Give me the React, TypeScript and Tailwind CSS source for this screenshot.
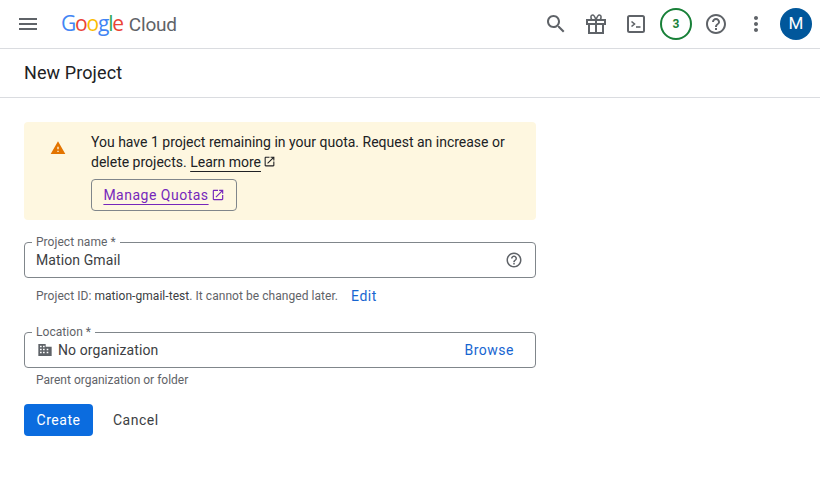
const paths = {
  menu: 'M3 18h18v-2H3v2zm0-5h18v-2H3v2zm0-7v2h18V6H3z',
  search:
    'M15.5 14h-.79l-.28-.27C15.41 12.59 16 11.11 16 9.5 16 5.91 13.09 3 9.5 3S3 5.91 3 9.5 5.91 16 9.5 16c1.61 0 3.09-.59 4.23-1.57l.27.28v.79l5 4.99L20.49 19l-4.99-5zm-6 0C7.01 14 5 11.99 5 9.5S7.01 5 9.5 5 14 7.01 14 9.5 11.99 14 9.5 14z',
  help: 'M11 18h2v-2h-2v2zm1-16C6.48 2 2 6.48 2 12s4.48 10 10 10 10-4.48 10-10S17.52 2 12 2zm0 18c-4.41 0-8-3.59-8-8s3.59-8 8-8 8 3.59 8 8-3.59 8-8 8zm0-14c-2.21 0-4 1.79-4 4h2c0-1.1.9-2 2-2s2 .9 2 2c0 2-3 1.75-3 5h2c0-2.25 3-2.5 3-5 0-2.21-1.79-4-4-4z',
  more: 'M12 8c1.1 0 2-.9 2-2s-.9-2-2-2-2 .9-2 2 .9 2 2 2zm0 2c-1.1 0-2 .9-2 2s.9 2 2 2 2-.9 2-2-.9-2-2-2zm0 6c-1.1 0-2 .9-2 2s.9 2 2 2 2-.9 2-2-.9-2-2-2z',
  warning: 'M1 21h22L12 2 1 21zm12-3h-2v-2h2v2zm0-4h-2v-4h2v4z',
  openNew:
    'M19 19H5V5h7V3H5c-1.11 0-2 .9-2 2v14c0 1.1.89 2 2 2h14c1.1 0 2-.9 2-2v-7h-2v7zM14 3v2h3.59l-9.83 9.83 1.41 1.41L19 6.41V10h2V3h-7z',
  // solid block with window cut-outs, reads heavier than the stock domain glyph at 16px
  domain:
    'M2 3h11v4h9v14H2V3zm2.500 2.500v2.500h2.500V5.500H4.500zm4.500 0v2.500h2.500V5.500H9zm-4.500 4.500v2.500h2.500V10H4.500zm4.500 0v2.500h2.500V10H9zm5.500 0v2.500H17V10h-2.500zM4.500 14.500V17h2.500v-2.500H4.500zm4.500 0V17h2.500v-2.500H9zm5.500 0V17H17v-2.500h-2.500z',
};

function Icon({ d, className }: { d: string; className: string }) {
  return (
    <svg viewBox="0 0 24 24" className={className} fill="currentColor" fillRule="evenodd">
      <path d={d} />
    </svg>
  );
}

function GiftIcon() {
  return (
    <svg viewBox="0 0 24 24" className="w-6 h-6" fill="none" stroke="currentColor" strokeWidth="2">
      <path d="M3 8h18v4H3z" />
      <path d="M5 12v9h14v-9" />
      <path d="M12 8v13" />
      <path d="M12 8S10.500 3 8.500 3C6.500 3 6.500 6 8 8M12 8s1.500-5 3.500-5c2 0 2 3 .5 5" strokeWidth="1.600" />
    </svg>
  );
}

function TerminalIcon() {
  return (
    <svg viewBox="0 0 24 24" className="w-6 h-6" fill="none" stroke="currentColor" strokeWidth="2">
      <rect x="4" y="4" width="16" height="16" rx="1.500" />
      <path d="M7.500 9.500 10.500 12l-3 2.500" strokeWidth="1.600" />
      <path d="M12 15h4.500" strokeWidth="1.600" />
    </svg>
  );
}

function Header() {
  return (
    <header className="h-[49px] flex items-center border-b border-[#dadce0] pl-2 pr-1 shrink-0">
      <button className="w-10 h-10 flex items-center justify-center text-[#5f6368]">
        <Icon d={paths.menu} className="w-6 h-6" />
      </button>
      <div className="ml-[13px] mb-[2px] flex items-baseline leading-none">
        <span className="flex font-['Open_Sans',sans-serif] text-[21px] tracking-[-1.2px]">
          <span className="text-[#4285f4]">G</span>
          <span className="text-[#ea4335]">o</span>
          <span className="text-[#fbbc04]">o</span>
          <span className="text-[#4285f4]">g</span>
          <span className="text-[#34a853]">l</span>
          <span className="text-[#ea4335]">e</span>
        </span>
        <span className="ml-[6px] text-[19px] text-[#5f6368] tracking-[-0.2px]">Cloud</span>
      </div>
      <div className="ml-auto flex items-center text-[#5f6368]">
        <button className="w-10 h-10 flex items-center justify-center">
          <Icon d={paths.search} className="w-6 h-6" />
        </button>
        <button className="w-10 h-10 flex items-center justify-center">
          <GiftIcon />
        </button>
        <button className="w-10 h-10 flex items-center justify-center">
          <TerminalIcon />
        </button>
        <div className="w-10 h-10 flex items-center justify-center">
          <div className="w-8 h-8 rounded-full border-2 border-[#188038] flex items-center justify-center text-[12px] font-bold text-[#188038]">
            3
          </div>
        </div>
        <button className="w-10 h-10 flex items-center justify-center">
          <Icon d={paths.help} className="w-6 h-6" />
        </button>
        <button className="w-10 h-10 flex items-center justify-center">
          <Icon d={paths.more} className="w-6 h-6" />
        </button>
        <div className="w-10 h-10 flex items-center justify-center">
          <div className="w-8 h-8 rounded-full bg-[#01579b] flex items-center justify-center text-white text-[17px]">
            M
          </div>
        </div>
      </div>
    </header>
  );
}

function QuotaBanner() {
  return (
    <div className="w-[512px] h-[98px] rounded bg-[#fef7e0] flex text-[14px] leading-5 text-[#202124]">
      <Icon d={paths.warning} className="w-[16px] h-[16px] ml-[26px] mt-[18px] mr-[25px] text-[#e37400] shrink-0" />
      <div className="pt-[10px]">
        <p>
          You have 1 project remaining in your quota. Request an increase or
          <br />
          delete projects.{' '}
          <a className="underline underline-offset-[4px]">Learn more</a>
          <Icon d={paths.openNew} className="inline-block w-[13px] h-[13px] ml-[2px] align-[-1px]" />
        </p>
        <button className="mt-[7px] w-[146px] h-[32px] rounded border border-[#80868b] flex items-center justify-center text-[#7627bb] text-[14px] tracking-[0.5px]">
          <span className="underline underline-offset-[4px]">Manage Quotas</span>
          <Icon d={paths.openNew} className="w-[14px] h-[14px] ml-[2px]" />
        </button>
      </div>
    </div>
  );
}

function Field({ label, children }: { label: string; children: React.ReactNode }) {
  return (
    <div className="relative w-[512px] h-[36px] rounded border border-[#80868b] flex items-center text-[14px] text-[#3c4043]">
      <span className="absolute left-[7px] -top-[8px] bg-white px-[4px] text-[12px] leading-[14px] text-[#5f6368] tracking-[0.05px]">
        {label}
      </span>
      {children}
    </div>
  );
}

export default function App() {
  return (
    <div className="w-[820px] h-[499px] bg-white flex flex-col overflow-hidden font-['Roboto',sans-serif]">
      <Header />
      <div className="h-[49px] flex items-center border-b border-[#dadce0] pl-6 pb-[2px] shrink-0">
        <h1 className="text-[18px] text-[#202124] tracking-[0.1px]">New Project</h1>
      </div>
      <main className="pl-6 pt-6">
        <QuotaBanner />
        <div className="mt-[22px]">
          <Field label="Project name *">
            <span className="pl-[11px] tracking-[0.1px]">Mation Gmail</span>
            <Icon d={paths.help} className="w-[18px] h-[18px] ml-auto mr-[12px] text-[#5f6368]" />
          </Field>
        </div>
        <div className="h-[36px] flex items-center pl-3 text-[12px] text-[#5f6368] tracking-[0.05px]">
          <span>
            Project ID: <span className="text-[#3c4043]">mation-gmail-test</span>. It cannot be changed later.
          </span>
          <a className="ml-[13px] text-[14px] text-[#1765d1] tracking-[0.5px]">Edit</a>
        </div>
        <div className="mt-[18px]">
          <Field label="Location *">
            <Icon d={paths.domain} className="w-[16px] h-[16px] ml-[12px] text-[#5f6368]" />
            <span className="ml-[5px] tracking-[0.1px]">No organization</span>
            <a className="ml-auto mr-[21px] text-[#1765d1] tracking-[0.5px]">Browse</a>
          </Field>
        </div>
        <p className="pl-3 mt-[5px] text-[12px] leading-[14px] text-[#5f6368]">Parent organization or folder</p>
        <div className="mt-[17px] flex items-center">
          <button className="w-[69px] h-[32px] rounded bg-[#0b6cdf] text-white text-[14px] tracking-[0.5px]">Create</button>
          <button className="ml-[20px] text-[14px] text-[#3c4043] tracking-[0.5px]">Cancel</button>
        </div>
      </main>
    </div>
  );
}
